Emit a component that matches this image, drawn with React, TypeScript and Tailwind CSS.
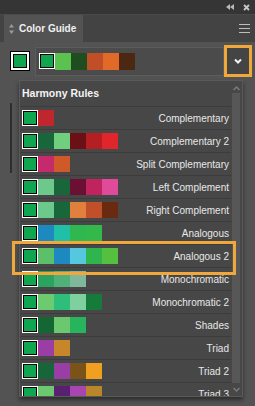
import React from 'react';

const G = '#10a650';

const rules: { name: string; colors: string[] }[] = [
  { name: 'Complementary', colors: ['#c0272d'] },
  { name: 'Complementary 2', colors: ['#17673a', '#6fcf7f', '#6b1015', '#b51f24', '#e0262b'] },
  { name: 'Split Complementary', colors: ['#c42a6c', '#d0592a'] },
  { name: 'Left Complement', colors: ['#6cc98b', '#17673a', '#6b0f35', '#c0245f', '#e04a9a'] },
  { name: 'Right Complement', colors: ['#6cc98b', '#17673a', '#e0803c', '#c0502a', '#6a2a10'] },
  { name: 'Analogous', colors: ['#1e88c0', '#20bfa8', '#2fb84f', '#33b94b'] },
  { name: 'Analogous 2', colors: ['#5cc06a', '#1e88c0', '#55c8e0', '#30b54e', '#55c040'] },
  { name: 'Monochromatic', colors: ['#2aa35f', '#4fb07a', '#7fb89a'] },
  { name: 'Monochromatic 2', colors: ['#6bcb6e', '#2ebd7a', '#7fd09f', '#157a3a'] },
  { name: 'Shades', colors: ['#146633', '#6cc86e', '#27b45c'] },
  { name: 'Triad', colors: ['#9a3ea6', '#c8862a'] },
  { name: 'Triad 2', colors: ['#17663a', '#9a3ea6', '#7a5318', '#f0a020'] },
  { name: 'Triad 3', colors: ['#6cc870', '#5a2070', '#a845b0', '#b9862a'] },
];

// base colour swatch with white ring
const BaseSwatch = ({ size }: { size: number }) => (
  <div className="bg-white p-[1px] shrink-0" style={{ width: size, height: size }}>
    <div className="w-full h-full border border-black" style={{ backgroundColor: G }} />
  </div>
);

const App = () => {
  return (
    <div className="relative w-[255px] h-[406px] bg-[#535353] overflow-hidden font-['Liberation_Sans',Arial,sans-serif]">
      {/* title bar */}
      <div className="h-[14px] bg-[#353535] flex items-center justify-end pr-[5px] gap-[9px]">
        <svg width="8" height="6" viewBox="0 0 8 6">
          <path d="M4 0 L0 3 L4 6 Z M8 0 L4 3 L8 6 Z" fill="#b8b8b8" />
        </svg>
        <svg width="7" height="7" viewBox="0 0 7 7">
          <path d="M1 1 L6 6 M6 1 L1 6" stroke="#c8c8c8" strokeWidth="1.8" />
        </svg>
      </div>

      {/* tab row */}
      <div className="h-[28px] flex bg-[#434343] border-t border-[#4a4a4a]">
        <div className="ml-[4px] w-[79px] bg-[#535353] flex items-center pl-[5px] gap-[5px]">
          <svg width="5" height="10" viewBox="0 0 5 10">
            <path d="M2.5 0 L5 3.5 L0 3.5 Z M2.5 10 L5 6.5 L0 6.5 Z" fill="#9a9a9a" />
          </svg>
          <span className="text-[10px] font-bold text-[#f0f0f0]">Color Guide</span>
        </div>
        <div className="flex-1 flex items-center justify-end pr-[5px]">
          <div className="flex flex-col gap-[3px]">
            <div className="w-[11px] h-[1px] bg-[#bdbdbd]" />
            <div className="w-[11px] h-[1px] bg-[#bdbdbd]" />
            <div className="w-[11px] h-[1px] bg-[#bdbdbd]" />
          </div>
        </div>
      </div>

      {/* current colours */}
      <div className="h-[38px] flex items-center pl-[10px] pr-[3px] gap-[5px]">
        <div className="w-[20px] h-[20px] border border-black bg-white p-[2px] shrink-0">
          <div className="w-full h-full border border-black" style={{ backgroundColor: G }} />
        </div>
        <div className="w-[189px] h-[29px] bg-[#4b4b4b] border border-[#5c5c5c] flex items-center pl-[3px]">
          <BaseSwatch size={16} />
          {['#5bc14f', '#1f4d1f', '#c04e27', '#e16a29', '#4c2812'].map((c) => (
            <div key={c} className="w-[16px] h-[17px]" style={{ backgroundColor: c }} />
          ))}
        </div>
        <div className="w-[28px] h-[32px] border-[3px] border-[#f0a83c] bg-[#444] flex items-center justify-center -ml-[5px]">
          <svg width="8" height="6" viewBox="0 0 8 6">
            <path d="M1 1.5 L4 4.5 L7 1.5" stroke="#f2f2f2" strokeWidth="2" fill="none" />
          </svg>
        </div>
      </div>

      {/* harmony rules dropdown */}
      <div className="ml-[19px] w-[224px] h-[317px] bg-[#474747] border border-[#5a5a5a] shadow-[0_3px_4px_rgba(0,0,0,0.45)] flex overflow-hidden">
        <div className="flex-1 flex flex-col">
          <div className="h-[26px] shrink-0 flex items-center pl-[2px] border-b border-[#3c3c3c]">
            <span className="text-[10.5px] font-bold text-[#f4f4f4]">Harmony Rules</span>
          </div>
          {rules.map((r) => (
            <div key={r.name} className="h-[23px] shrink-0 flex items-center pl-[2px] pr-[2px] border-b border-[#3c3c3c]">
              <BaseSwatch size={16} />
              {r.colors.map((c, i) => (
                <div key={i} className="w-[16px] h-[16px]" style={{ backgroundColor: c }} />
              ))}
              <span className="ml-auto text-[10px] text-[#e8e8e8]">{r.name}</span>
            </div>
          ))}
        </div>
        {/* scrollbar */}
        <div className="w-[11px] flex flex-col items-center pr-[1px]">
          <svg className="mt-[5px]" width="7" height="5" viewBox="0 0 7 5">
            <path d="M0.5 4 L3.5 1 L6.5 4" stroke="#7a7a7a" strokeWidth="1.5" fill="none" />
          </svg>
          <div className="w-[8px] flex-1 mt-[2px] bg-[#575757]" />
          <svg className="my-[4px]" width="7" height="5" viewBox="0 0 7 5">
            <path d="M0.5 1 L3.5 4 L6.5 1" stroke="#7a7a7a" strokeWidth="1.5" fill="none" />
          </svg>
        </div>
      </div>

      {/* panel edge behind the dropdown */}
      <div className="absolute left-[10px] top-[103px] w-[2px] h-[70px] bg-[#2e2e2e]" />

      {/* highlight around Analogous 2 */}
      <div className="absolute left-[12px] top-[241px] w-[224px] h-[34px] border-[3px] border-[#f0a83c]" />
    </div>
  );
};

export default App;
